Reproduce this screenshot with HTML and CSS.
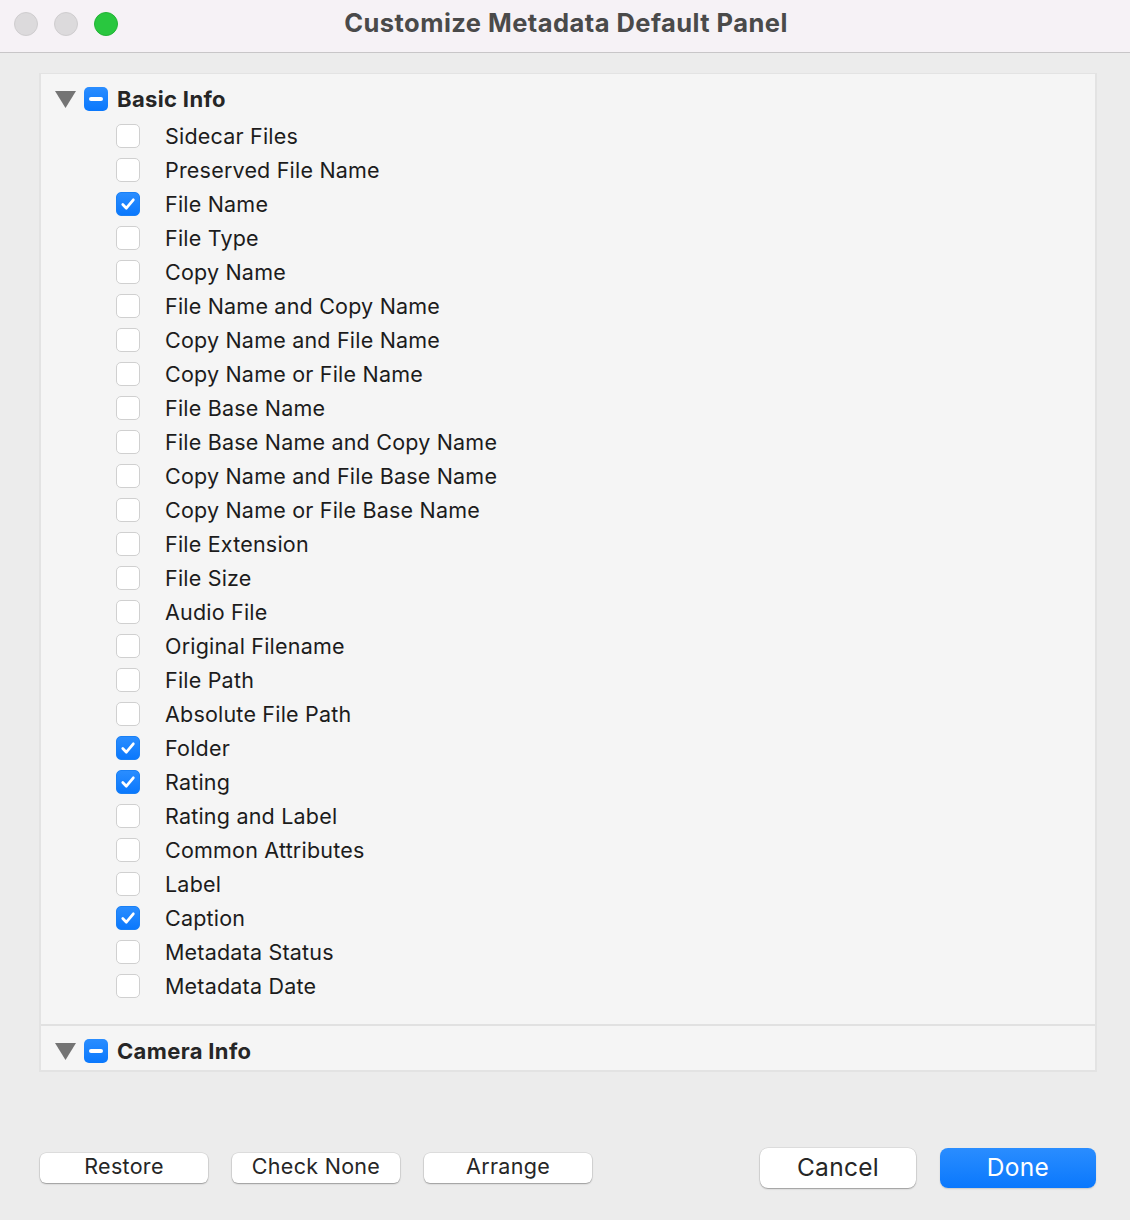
FILE: index.html
```html
<!DOCTYPE html>
<html>
<head>
<meta charset="utf-8">
<link rel="stylesheet" href="styles.css">
</head>
<body>
<div class="window">
  <header class="titlebar">
    <div class="lights">
      <span class="light grey"></span>
      <span class="light grey"></span>
      <span class="light green"></span>
    </div>
    <div class="title">Customize Metadata Default Panel</div>
    <div></div>
  </header>
  <main class="content">
    <div class="panel">
      <section class="section first">
        <div class="sec-head">
          <svg class="tri" width="21" height="17" viewBox="0 0 21 17"><polygon points="0,0 21,0 10.5,17" fill="#747474"/></svg>
          <span class="mixed"><span class="bar"></span></span>
          <span class="sec-title">Basic Info</span>
        </div>
        <ul class="rows">
          <li><span class="cb"></span>Sidecar Files</li>
          <li><span class="cb"></span>Preserved File Name</li>
          <li><span class="cb on"><svg viewBox="0 0 24 24"><path d="M6.3 12.6 L10.2 16.6 L17.8 7.4"/></svg></span>File Name</li>
          <li><span class="cb"></span>File Type</li>
          <li><span class="cb"></span>Copy Name</li>
          <li><span class="cb"></span>File Name and Copy Name</li>
          <li><span class="cb"></span>Copy Name and File Name</li>
          <li><span class="cb"></span>Copy Name or File Name</li>
          <li><span class="cb"></span>File Base Name</li>
          <li><span class="cb"></span>File Base Name and Copy Name</li>
          <li><span class="cb"></span>Copy Name and File Base Name</li>
          <li><span class="cb"></span>Copy Name or File Base Name</li>
          <li><span class="cb"></span>File Extension</li>
          <li><span class="cb"></span>File Size</li>
          <li><span class="cb"></span>Audio File</li>
          <li><span class="cb"></span>Original Filename</li>
          <li><span class="cb"></span>File Path</li>
          <li><span class="cb"></span>Absolute File Path</li>
          <li><span class="cb on"><svg viewBox="0 0 24 24"><path d="M6.3 12.6 L10.2 16.6 L17.8 7.4"/></svg></span>Folder</li>
          <li><span class="cb on"><svg viewBox="0 0 24 24"><path d="M6.3 12.6 L10.2 16.6 L17.8 7.4"/></svg></span>Rating</li>
          <li><span class="cb"></span>Rating and Label</li>
          <li><span class="cb"></span>Common Attributes</li>
          <li><span class="cb"></span>Label</li>
          <li><span class="cb on"><svg viewBox="0 0 24 24"><path d="M6.3 12.6 L10.2 16.6 L17.8 7.4"/></svg></span>Caption</li>
          <li><span class="cb"></span>Metadata Status</li>
          <li><span class="cb"></span>Metadata Date</li>
        </ul>
      </section>
      <section class="section">
        <div class="sec-head">
          <svg class="tri" width="21" height="17" viewBox="0 0 21 17"><polygon points="0,0 21,0 10.5,17" fill="#747474"/></svg>
          <span class="mixed"><span class="bar"></span></span>
          <span class="sec-title">Camera Info</span>
        </div>
      </section>
    </div>
  </main>
  <footer class="footer">
    <div class="btn-group">
      <button class="btn small">Restore</button>
      <button class="btn small">Check None</button>
      <button class="btn small">Arrange</button>
    </div>
    <div class="btn-group">
      <button class="btn large">Cancel</button>
      <button class="btn large primary">Done</button>
    </div>
  </footer>
</div>
</body>
</html>
```

FILE: styles.css
```css
* { box-sizing: border-box; }
html, body {
  margin: 0;
  padding: 0;
}
body {
  width: 1130px;
  height: 1220px;
  background: #ececec;
  font-family: "Inter", "Helvetica Neue", "Liberation Sans", sans-serif;
  color: #1e1e1e;
  overflow: hidden;
}
.window {
  width: 1130px;
  height: 1220px;
  display: flex;
  flex-direction: column;
}
.titlebar {
  height: 53px;
  flex: none;
  background: #f6f2f6;
  border-bottom: 1px solid #c8c6c8;
  display: grid;
  grid-template-columns: 1fr auto 1fr;
  align-items: start;
}
.lights {
  display: flex;
  gap: 16px;
  padding: 12px 0 0 14px;
}
.light {
  width: 24px;
  height: 24px;
  border-radius: 50%;
}
.light.grey {
  background: #dcdadc;
  border: 1px solid #cfcdcf;
}
.light.green {
  background: #29c73f;
  border: 1px solid #22b336;
}
.title {
  font-size: 25.5px;
  font-weight: 700;
  color: #4a4a4a;
  padding-top: 7px;
  padding-left: 2px;
  letter-spacing: 0.45px;
}
.content {
  padding: 20px 33px 0 39px;
}
.panel {
  background: #f5f5f5;
  border: 2px solid #e3e3e3;
  border-top-width: 1px;
}
.section {
  padding: 8px 0 2px 0;
}
.section.first {
  padding-bottom: 21px;
  border-bottom: 2px solid #e1e1e1;
}
.sec-head {
  height: 34px;
  display: flex;
  align-items: center;
  padding-left: 14px;
}
.tri {
  display: block;
  flex: none;
  margin-top: 1px;
}
.mixed {
  width: 24px;
  height: 24px;
  border-radius: 5px;
  background: linear-gradient(#2a8dff, #0a78fd);
  margin-left: 8px;
  display: flex;
  align-items: center;
  justify-content: center;
  flex: none;
}
.bar {
  width: 14px;
  height: 4px;
  border-radius: 2px;
  background: #fff;
}
.sec-title {
  font-size: 22px;
  font-weight: 700;
  color: #262626;
  margin-left: 9px;
  letter-spacing: 0.35px;
}
.rows {
  list-style: none;
  margin: 3px 0 0 0;
  padding: 0 0 0 75px;
}
.rows li {
  height: 34px;
  display: flex;
  align-items: center;
  font-size: 21.5px;
  color: #1c1c1c;
  letter-spacing: 0.2px;
}
.cb {
  width: 24px;
  height: 24px;
  border-radius: 5px;
  background: #ffffff;
  border: 1px solid #d0d0d0;
  margin-right: 25px;
  flex: none;
  display: flex;
  align-items: center;
  justify-content: center;
}
.cb.on {
  background: linear-gradient(#2a8dff, #0a78fd);
  border-color: #1a80f5;
}
.cb svg {
  width: 24px;
  height: 24px;
  display: block;
}
.cb svg path {
  fill: none;
  stroke: #fff;
  stroke-width: 3;
  stroke-linecap: round;
  stroke-linejoin: round;
}
.footer {
  flex: 1;
  display: flex;
  justify-content: space-between;
  align-items: flex-start;
  padding: 76px 34px 0 40px;
}
.btn-group {
  display: flex;
  gap: 24px;
  align-items: center;
  height: 40px;
}
.btn {
  font-family: inherit;
  background: #ffffff;
  border: none;
  color: #262626;
  box-shadow: 0 0 0 0.5px rgba(0,0,0,0.12), 0 1px 1.5px rgba(0,0,0,0.3);
  padding: 0;
  margin: 0;
}
.btn.small {
  width: 168px;
  height: 30px;
  border-radius: 6px;
  font-size: 21.5px;
  letter-spacing: 0.3px;
  padding-bottom: 3px;
  margin-top: -1px;
}
.btn.large {
  width: 156px;
  height: 40px;
  border-radius: 8px;
  font-size: 24.5px;
  letter-spacing: 0.3px;
  padding-bottom: 2px;
}
.btn.primary {
  background: linear-gradient(#2a8dff, #0a78fd);
  color: #ffffff;
  box-shadow: 0 1px 1.5px rgba(0,0,0,0.15);
}
```
